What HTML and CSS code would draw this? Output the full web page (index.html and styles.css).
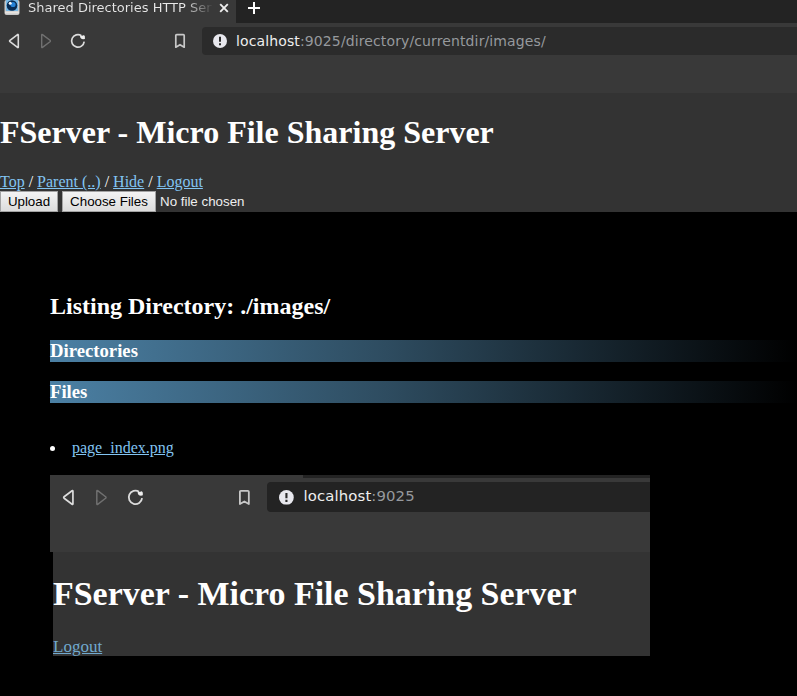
FILE: index.html
```html
<!DOCTYPE html>
<html lang="en">
<head>
<meta charset="utf-8">
<title>Shared Directories HTTP Server</title>
<link rel="stylesheet" href="styles.css">
</head>
<body>
<svg class="defs" width="0" height="0">
  <defs>
    <symbol id="back" viewBox="0 0 12 16"><path d="M10.3 1.9v12.2q-.1.8-.8.3L2 8.7q-.8-.7 0-1.4l7.5-5.7q.7-.5.8.3Z" fill="none" stroke="currentColor" stroke-width="1.6" stroke-linejoin="round"/></symbol>
    <symbol id="forward" viewBox="0 0 12 16"><path d="M1.7 1.900v12.200q.1.8.8.3L10 8.700q.8-.7 0-1.400L2.500 1.600q-.7-.5-.8.300Z" fill="none" stroke="currentColor" stroke-width="1.400" stroke-linejoin="round"/></symbol>
    <symbol id="reload" viewBox="0 0 16 16"><path d="M11.400 2.600A6.300 6.300 0 1 0 14.200 8.600" fill="none" stroke="currentColor" stroke-width="1.700"/><path d="M10 2.500Q10 6.300 13.200 6.300L14.900 6V3.600Q14.600 2 13.200 2.200L12.300 2.800Z" fill="#eee"/></symbol>
    <symbol id="bookmark" viewBox="0 0 12 16"><path d="M1.800 2.600q0-.9.900-.9h6.600q.9 0 .9.900v11.600L6 11.700l-4.200 2.500Z" fill="none" stroke="currentColor" stroke-width="1.700" stroke-linejoin="round"/></symbol>
    <symbol id="info" viewBox="0 0 14 14"><circle cx="7" cy="7" r="7" fill="#e8e8ee"/><path d="M6 2.800h2v5H6zM6 9.300h2v2H6z" fill="#2b2b2b"/></symbol>
  </defs>
</svg>
<div class="tabs">
  <div class="tab">
    <svg class="favicon" viewBox="0 0 16 17">
      <rect x=".5" y="1" width="15" height="15" rx="2" fill="#c9c9c9"/>
      <rect x="2" y="0" width="12" height="12" fill="#7abbe8"/>
      <circle cx="8" cy="6.500" r="5.300" fill="#082c54"/>
      <circle cx="9" cy="5.500" r="2.600" fill="#2583d8"/>
      <circle cx="6.200" cy="4.300" r="1.500" fill="#f4faff"/>
      <path d="M1 13.500h14" stroke="#e8e4e0" stroke-width="2"/>
    </svg>
    <span class="tab-title">Shared Directories HTTP Server</span>
    <svg class="close" viewBox="0 0 10 10"><path d="m1.200 1.200 7.600 7.600M8.800 1.200 1.200 8.800" stroke="#eee" stroke-width="1.900"/></svg>
  </div>
  <svg class="plus" viewBox="0 0 12 12"><path d="M6 0v12M0 6h12" stroke="#fff" stroke-width="2"/></svg>
</div>
<div class="toolbar">
  <svg class="icon back"><use href="#back"/></svg>
  <svg class="icon forward"><use href="#forward"/></svg>
  <svg class="icon reload"><use href="#reload"/></svg>
  <svg class="icon bookmark"><use href="#bookmark"/></svg>
  <div class="url"><svg class="info"><use href="#info"/></svg><span><b>localhost</b>:9025/directory/currentdir/images/</span></div>
</div>
<header>
  <h1>FServer - Micro File Sharing Server</h1>
  <nav><a href="#">Top</a> / <a href="#">Parent (..)</a> / <a href="#">Hide</a> / <a href="#">Logout</a></nav>
  <form class="upload"><button type="button">Upload</button><button type="button" class="choose">Choose Files</button><span>No file chosen</span></form>
</header>
<main>
  <h2>Listing Directory: ./images/</h2>
  <h3>Directories</h3>
  <h3>Files</h3>
  <ul><li><a href="#">page_index.png</a></li></ul>
  <div class="preview">
    <div class="preview-strip"></div>
    <div class="toolbar">
      <svg class="icon back"><use href="#back"/></svg>
      <svg class="icon forward"><use href="#forward"/></svg>
      <svg class="icon reload"><use href="#reload"/></svg>
      <svg class="icon bookmark"><use href="#bookmark"/></svg>
      <div class="url"><svg class="info"><use href="#info"/></svg><span><b>localhost</b>:9025</span></div>
    </div>
    <div class="preview-page">
      <h1>FServer - Micro File Sharing Server</h1>
      <a href="#">Logout</a>
    </div>
  </div>
</main>
</body>
</html>
```
FILE: styles.css
```css
* { box-sizing: border-box; }
html, body { height: 100%; }
body {
  --u: 1px;
  margin: 0;
  overflow: hidden;
  background: #000;
  color: #fff;
  font: 16px/18px "Liberation Serif", serif;
}
svg { display: block; flex: none; }
.defs { position: absolute; }
a { color: #82c4f2; }

.tabs { display: flex; height: 23px; background: #232323; }
.tab {
  display: flex;
  width: 236px;
  padding-left: 4px;
  background: #393939;
}
.favicon { width: 16px; height: 17px; margin-top: -1px; }
.tab-title {
  width: 184px;
  margin-left: 8px;
  overflow: hidden;
  white-space: nowrap;
  font: 13px/15px "DejaVu Sans", sans-serif;
  background: linear-gradient(90deg, #e8e8e8 156px, #393939 186px);
  background-clip: text;
  color: transparent;
}
.close { width: 10px; height: 10px; margin: 3px 0 0 7px; }
.plus { width: 12px; height: 12px; margin: 2px 0 0 12px; }

.toolbar {
  display: flex;
  height: 70px;
  padding: 4px 0 0 calc(8 * var(--u));
  background: #393939;
  color: #dcdcdc;
}
.icon { width: calc(12 * var(--u)); height: calc(16 * var(--u)); margin-top: calc(6 * var(--u)); }
.forward { margin-left: calc(20 * var(--u)); color: #707070; }
.reload { width: calc(16 * var(--u)); margin-left: calc(18 * var(--u)); }
.bookmark { margin-left: calc(88 * var(--u)); color: #c8c8c8; }
.url {
  display: flex;
  flex: 1;
  align-items: center;
  height: calc(28 * var(--u));
  margin-left: calc(16 * var(--u));
  padding-left: calc(11 * var(--u));
  border-radius: 4px 0 0 4px;
  background: #2b2b2b;
  color: #96999d;
  font: calc(14 * var(--u))/1.2 "DejaVu Sans", sans-serif;
  letter-spacing: .12px;
  white-space: nowrap;
}
.url b { color: #eee; font-weight: normal; }
.info { width: calc(14 * var(--u)); height: calc(14 * var(--u)); margin-right: calc(9 * var(--u)); }

header { height: 119px; padding-top: 21px; background: #333; }
h1 { margin: 0; font-size: 32px; line-height: 37px; }
nav { margin-top: 22px; }
.upload { display: flex; margin: 0; font: 13.333px/21px "Liberation Sans", sans-serif; color: #eee; }
button {
  width: 58px;
  height: 21px;
  padding: 0;
  border: 1px solid #a3a3a3;
  background: linear-gradient(#f3f3f3, #dcdcdc);
  color: #000;
  font: inherit;
  line-height: 19px;
}
.choose { width: 94px; margin: 0 4px; }

main { padding: 81px 0 0 50px; }
h2 { margin: 0 0 20px; font-size: 24px; line-height: 27px; }
h3 {
  height: 22px;
  margin: 0 0 19px;
  background: linear-gradient(90deg, #4b80a4, #2e4c60 45%, #000);
  font-size: 18.72px;
  line-height: 22px;
}
ul { margin: 36px 0 18px; padding: 0; list-style-position: inside; }

.preview { --u: 1.062px; width: 600px; background: #393939; }
.preview-strip { height: 3px; margin-left: 253px; background: #232323; }
.preview .toolbar { height: 74px; padding-left: 11.500px; background: transparent; }
.preview .icon { margin-top: 7px; }
.preview .url { padding-top: 1px; background: #232323; }
.preview-page {
  height: 104px;
  padding-top: 23px;
  border-left: 3px solid #000;
  background: #333;
  font-size: 17.02px;
}
.preview h1 { margin-bottom: 25px; font-size: 33.95px; line-height: 38px; }
.preview a { color: #70a9ce; }
```
